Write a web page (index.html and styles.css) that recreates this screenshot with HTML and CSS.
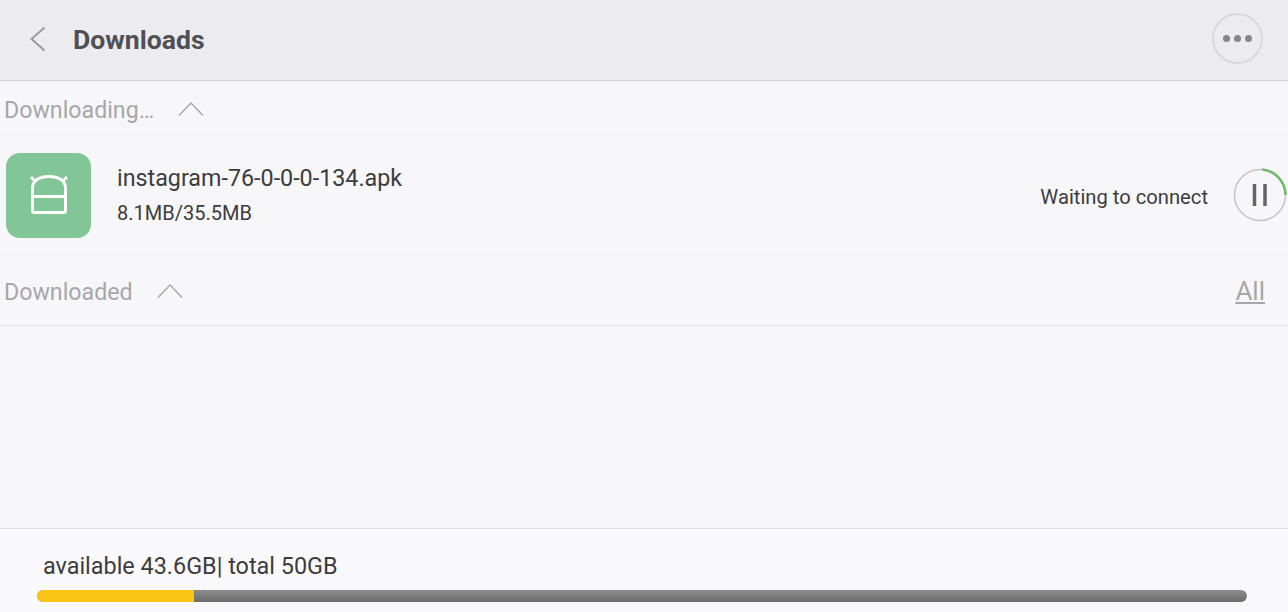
FILE: index.html
```html
<!DOCTYPE html>
<html lang="en">
<head>
    <meta charset="UTF-8">
    <meta name="viewport" content="width=device-width, initial-scale=1.0">
    <title>Downloads</title>
    <link rel="stylesheet" href="styles.css">
</head>
<body>
    <div class="page">
        <header class="top-bar">
            <svg class="back-icon" width="18" height="26" viewBox="0 0 18 26">
                <path d="M15.5 1.5 L2.5 13 L15.5 24.5" fill="none" stroke="#9a9a9f" stroke-width="2"/>
            </svg>
            <h1 class="title">Downloads</h1>
            <div class="more-btn">
                <span class="dot"></span>
                <span class="dot"></span>
                <span class="dot"></span>
            </div>
        </header>

        <div class="section-head section-downloading">
            <span class="section-label">Downloading…</span>
            <svg class="chevron" width="26" height="16" viewBox="0 0 26 16">
                <path d="M1 14.5 L13 2 L25 14.5" fill="none" stroke="#a8a8ad" stroke-width="1.5"/>
            </svg>
        </div>

        <div class="task-row">
            <div class="apk-tile">
                <svg width="38" height="42" viewBox="0 0 38 42">
                    <path d="M2.5 22.5 V36.5 Q2.5 38.5 4.5 38.5 H33.5 Q35.5 38.5 35.5 36.5 V14 C35.5 6 28 2.5 19 2.5 C10 2.5 2.5 6 2.5 14 Z M2.5 22.5 H35.5" fill="none" stroke="#fff" stroke-width="3"/>
                    <path d="M1 3 L5.5 7.5 M37 3 L32.5 7.5" fill="none" stroke="#fff" stroke-width="3"/>
                </svg>
            </div>
            <div class="task-info">
                <div class="task-name">instagram-76-0-0-0-134.apk</div>
                <div class="task-size">8.1MB/35.5MB</div>
            </div>
            <div class="task-status">Waiting to connect</div>
            <svg class="pause-ring" width="54" height="54" viewBox="0 0 54 54">
                <circle cx="27" cy="27" r="25.5" fill="none" stroke="#c4c4c6" stroke-width="1.5"/>
                <path d="M27 1.5 A25.5 25.5 0 0 1 52.5 27" fill="none" stroke="#6fbb63" stroke-width="2.5" pathLength="100" stroke-dasharray="0 6 94"/>
                <path d="M21.5 16 V38 M32 16 V38" fill="none" stroke="#66666a" stroke-width="3.5"/>
            </svg>
        </div>

        <div class="section-head section-downloaded">
            <span class="section-label">Downloaded</span>
            <svg class="chevron" width="26" height="16" viewBox="0 0 26 16">
                <path d="M1 14.5 L13 2 L25 14.5" fill="none" stroke="#a8a8ad" stroke-width="1.5"/>
            </svg>
            <a class="all-link">All</a>
        </div>

        <div class="empty-area"></div>

        <footer class="storage">
            <div class="storage-text">available 43.6GB| total 50GB</div>
            <div class="storage-bar">
                <div class="storage-used" style="width: 13%"></div>
            </div>
        </footer>
    </div>
</body>
</html>
```

FILE: styles.css
```css
* {
    box-sizing: border-box;
}

body {
    margin: 0;
    font-family: 'Roboto', sans-serif;
    background-color: #f7f7f9;
    overflow: hidden;
}

.page {
    height: 612px;
    display: flex;
    flex-direction: column;
}

.top-bar {
    height: 81px;
    display: flex;
    align-items: center;
    padding: 0 25px 2px 29px;
    background-color: #ecebef;
    border-bottom: 1px solid #d2d2d4;
}

.back-icon {
    margin-right: 26px;
}

.title {
    margin: 0;
    font-size: 26.6px;
    font-weight: 700;
    color: #505054;
}

.more-btn {
    margin-left: auto;
    width: 51px;
    height: 51px;
    margin-bottom: 1px;
    display: flex;
    align-items: center;
    justify-content: center;
    gap: 4px;
    border: 2px solid #d9d9dc;
    border-radius: 50%;
}

.dot {
    width: 7px;
    height: 7px;
    border-radius: 50%;
    background-color: #85858a;
}

.section-head {
    display: flex;
    align-items: center;
    padding-top: 2px;
    padding-left: 4px;
    border-bottom: 1px solid #eeeef0;
}

.section-downloading {
    height: 54px;
    gap: 24px;
}

.section-downloaded {
    height: 71px;
    gap: 24px;
    padding-right: 23px;
    border-bottom-color: #e2e2e4;
}

.section-label {
    margin-top: 2px;
    font-size: 23.2px;
    color: #a6a6ab;
}

.all-link {
    margin-left: auto;
    font-size: 26px;
    color: #a6a6ab;
    text-decoration: underline;
}

.task-row {
    height: 120px;
    display: flex;
    align-items: center;
    padding: 2px 1px 0 6px;
    border-bottom: 1px solid #eeeef0;
}

.apk-tile {
    width: 85px;
    height: 85px;
    flex-shrink: 0;
    display: flex;
    align-items: center;
    justify-content: center;
    padding-bottom: 1px;
    background-color: #82c597;
    border-radius: 14px;
}

.task-info {
    margin-left: 26px;
    margin-bottom: 2px;
    display: flex;
    flex-direction: column;
    gap: 9px;
}

.task-name {
    font-size: 23.3px;
    color: #3c3c40;
}

.task-size {
    font-size: 20px;
    color: #3c3c40;
}

.task-status {
    margin-left: auto;
    margin-top: 2px;
    margin-right: 25px;
    font-size: 20.2px;
    color: #3c3c40;
}

.pause-ring {
    margin-bottom: 2px;
}

.empty-area {
    flex: 1;
    border-bottom: 1px solid #dedee0;
}

.storage {
    height: 83px;
    padding: 23px 41px 0 37px;
    background-color: #f9f9fb;
}

.storage-text {
    margin-left: 6px;
    margin-bottom: 10px;
    font-size: 23.4px;
    color: #3c3c40;
}

.storage-bar {
    height: 12px;
    border-radius: 6px;
    overflow: hidden;
    background: linear-gradient(to bottom, #8b8b8b, #6c6c6c);
}

.storage-used {
    height: 100%;
    background-color: #fdc513;
}
```
